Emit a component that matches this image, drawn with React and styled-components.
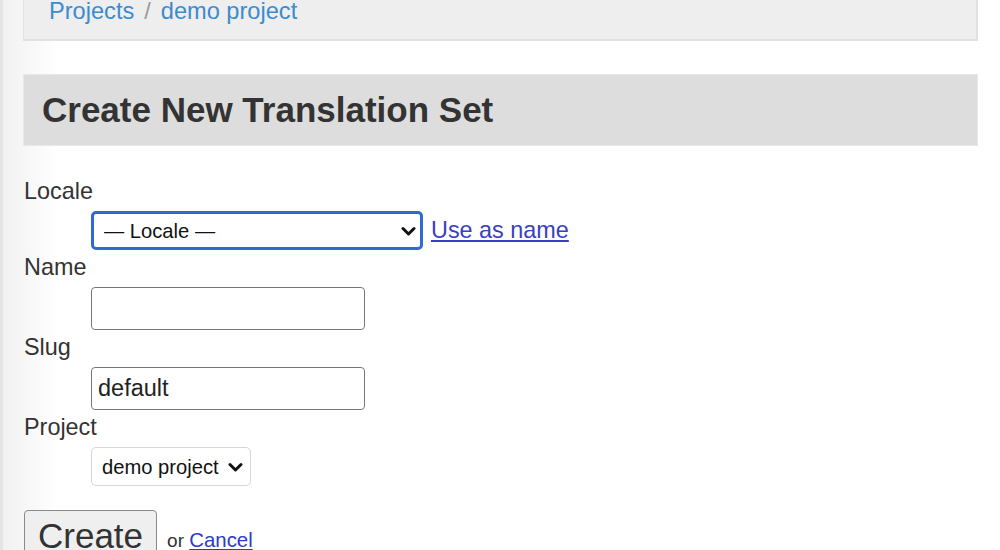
import React from "react";
import styled, { createGlobalStyle } from "styled-components";

const GlobalStyle = createGlobalStyle`
  html, body {
    margin: 0;
    padding: 0;
    height: 100%;
    overflow: hidden;
  }
  body {
    font-family: "Liberation Sans", Arial, sans-serif;
    color: #333;
    background:
      linear-gradient(to right, #e4e4e4 0, #e4e4e4 3px, #f1f1f1 3px, #ffffff 58px);
  }
`;

const Page = styled.div`
  padding: 0 22px 0 23px;
`;

const Breadcrumb = styled.nav`
  margin-top: -20px;
  padding: 17px 25px 15px;
  background: #eeeeee;
  border: 1px solid #e2e2e2;
  border-width: 1px 2px 2px 1px;
  font-size: 23.6px;
  line-height: 26px;
`;

const CrumbLink = styled.a`
  color: #3b8bd0;
  text-decoration: none;
`;

const Sep = styled.span`
  color: #9a9a9a;
  margin: 0 10px;
`;

const Heading = styled.h2`
  margin: 33px 0 0;
  padding: 0 18px;
  height: 70px;
  display: flex;
  align-items: center;
  background: #dddddd;
  border: 1px solid #e8e8e8;
  font-size: 35px;
  font-weight: 700;
  color: #333;
`;

const Form = styled.form`
  padding-top: 33px;
`;

const Label = styled.label`
  display: block;
  padding-left: 1px;
  font-size: 23.4px;
  line-height: 24px;
  color: #333;
`;

const ControlRow = styled.div`
  display: flex;
  align-items: center;
  gap: 8px;
  margin: 8px 0 5px 68px;
`;

const SelectWrap = styled.div`
  position: relative;
  display: inline-block;
`;

const Select = styled.select`
  appearance: none;
  -webkit-appearance: none;
  box-sizing: border-box;
  width: ${(p) => p.$width}px;
  height: 39px;
  padding: 0 30px 0 10px;
  font-family: "Liberation Sans", Arial, sans-serif;
  font-size: 20.2px;
  color: #111;
  background: #fff;
  border: ${(p) => (p.$focused ? "3px solid #2f6ad0" : "1px solid #d6d6d6")};
  border-radius: 5px;
  outline: none;
`;

const Chevron = styled.svg`
  position: absolute;
  right: ${(p) => p.$right}px;
  top: 50%;
  transform: translateY(-50%);
  pointer-events: none;
`;

const Input = styled.input`
  box-sizing: border-box;
  width: 274px;
  height: 43px;
  padding: 0 6px;
  font-family: "Liberation Sans", Arial, sans-serif;
  font-size: 23.5px;
  color: #222;
  background: #fff;
  border: 1px solid #767676;
  border-radius: 4px;
  outline: none;
`;

const TextLink = styled.a`
  color: #3a3fbf;
  font-size: 23.4px;
  text-decoration: underline;
`;

const Actions = styled.div`
  margin-top: 24px;
  padding-left: 1px;
  display: flex;
  align-items: flex-end;
  gap: 10px;
`;

const Button = styled.button`
  box-sizing: border-box;
  height: 52px;
  padding: 0 13px;
  font-family: "Liberation Sans", Arial, sans-serif;
  font-size: 35px;
  line-height: 50px;
  color: #333;
  background: #efefef;
  border: 1px solid #8a8a8a;
  border-radius: 4px;
`;

const OrText = styled.span`
  font-size: 19px;
  color: #333;
  padding-bottom: 10px;

  a {
    font-size: 20.4px;
    color: #2b3cc8;
  }
`;

function ChevronIcon({ right }) {
  return (
    <Chevron $right={right} width="15" height="11" viewBox="0 0 15 11">
      <path
        d="M2 3 L7.5 8.5 L13 3"
        fill="none"
        stroke="#111"
        strokeWidth="3"
        strokeLinecap="round"
        strokeLinejoin="round"
      />
    </Chevron>
  );
}

export default function App() {
  return (
    <>
      <GlobalStyle />
      <Page>
        <Breadcrumb>
          <CrumbLink href="#">Projects</CrumbLink>
          <Sep>/</Sep>
          <CrumbLink href="#">demo project</CrumbLink>
        </Breadcrumb>

        <Heading>Create New Translation Set</Heading>

        <Form onSubmit={(e) => e.preventDefault()}>
          <Label htmlFor="locale">Locale</Label>
          <ControlRow>
            <SelectWrap>
              <Select id="locale" $width={332} $focused defaultValue="">
                <option value="">— Locale —</option>
              </Select>
              <ChevronIcon right={7} />
            </SelectWrap>
            <TextLink href="#">Use as name</TextLink>
          </ControlRow>

          <Label htmlFor="name">Name</Label>
          <ControlRow>
            <Input id="name" type="text" />
          </ControlRow>

          <Label htmlFor="slug">Slug</Label>
          <ControlRow>
            <Input id="slug" type="text" defaultValue="default" />
          </ControlRow>

          <Label htmlFor="project">Project</Label>
          <ControlRow>
            <SelectWrap>
              <Select id="project" $width={160} defaultValue="demo">
                <option value="demo">demo project</option>
              </Select>
              <ChevronIcon right={8} />
            </SelectWrap>
          </ControlRow>

          <Actions>
            <Button type="submit">Create</Button>
            <OrText>
              or <a href="#">Cancel</a>
            </OrText>
          </Actions>
        </Form>
      </Page>
    </>
  );
}
